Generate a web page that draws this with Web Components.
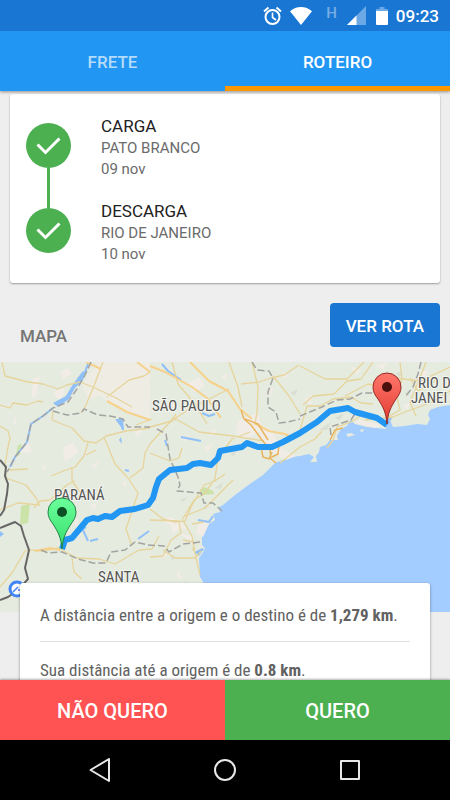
<!DOCTYPE html>
<html lang="pt-BR">
<head>
<meta charset="UTF-8">
<meta name="viewport" content="width=device-width, initial-scale=1">
<title>Roteiro</title>
<style>
    body {
        margin: 0;
        font-family: Roboto, sans-serif;
        font-size: 17px;
        color: #212121;
        --blue: #2196f3;
        --blue-dark: #1976d2;
        --green: #4caf50;
        --red: #ff5252;
        --orange: #ff9800;
        --gray: #eeeeee;
        --muted: #6b6b6b;
        --condensed: "Roboto Condensed", "Liberation Sans Narrow", Roboto, sans-serif;
    }
</style>
</head>
<body>
<freight-app>
    <status-bar slot="top" time="09:23"></status-bar>
    <tab-bar slot="top">
        <tab-item>FRETE</tab-item>
        <tab-item active>ROTEIRO</tab-item>
    </tab-bar>

    <route-card>
        <route-step>
            CARGA
            <span slot="city">PATO BRANCO</span>
            <span slot="date">09 nov</span>
        </route-step>
        <route-step last>
            DESCARGA
            <span slot="city">RIO DE JANEIRO</span>
            <span slot="date">10 nov</span>
        </route-step>
    </route-card>
    <section-header action="VER ROTA">MAPA</section-header>
    <route-map></route-map>
    <distance-card>
        <distance-row>A distância entre a origem e o destino é de <b>1,279 km</b>.</distance-row>
        <distance-row>Sua distância até a origem é de <b>0.8 km</b>.</distance-row>
    </distance-card>

    <action-bar slot="bottom">
        <action-button kind="reject">NÃO QUERO</action-button>
        <action-button kind="accept">QUERO</action-button>
    </action-bar>
    <system-nav slot="bottom"></system-nav>
</freight-app>

<script>
class FreightApp extends HTMLElement {
    constructor() {
        super();
        this.attachShadow({ mode: "open" });
        this.shadowRoot.innerHTML = `
            <style>
                :host {
                    display: flex;
                    flex-direction: column;
                    height: 100vh;
                    background: var(--gray);
                }
                header {
                    position: relative;
                    z-index: 1;
                    box-shadow: 0 1px 3px rgba(0, 0, 0, 0.4);
                }
                main {
                    flex: 1;
                    min-height: 0;
                    overflow: hidden;
                }
                footer {
                    position: relative;
                    z-index: 1;
                    box-shadow: 0 -1px 2px rgba(0, 0, 0, 0.3);
                }
            </style>
            <header><slot name="top"></slot></header>
            <main><slot></slot></main>
            <footer><slot name="bottom"></slot></footer>
        `;
    }
}

class StatusBar extends HTMLElement {
    constructor() {
        super();
        this.attachShadow({ mode: "open" });
    }

    connectedCallback() {
        this.shadowRoot.innerHTML = `
            <style>
                :host {
                    display: flex;
                    justify-content: flex-end;
                    align-items: center;
                    gap: 8px;
                    height: 31px;
                    padding: 0 11px;
                    background: var(--blue-dark);
                    color: #fff;
                    font-weight: 500;
                    line-height: 20px;
                }
                .network {
                    display: flex;
                    align-items: center;
                    gap: 10px;
                    margin: 0 2px 0 6px;
                }
                .type {
                    align-self: flex-start;
                    font-size: 15px;
                    line-height: 14px;
                    opacity: 0.4;
                }
                svg { display: block; }
            </style>
            <svg width="19" height="20" viewBox="0 0 19 20" fill="none" stroke="#fff" stroke-width="2">
                <circle cx="9.5" cy="11" r="7"/>
                <path d="M9.5 6.5v5l3.5 2.5" stroke-width="1.6"/>
                <path d="M1 5.5l4.5-4M18 5.5l-4.5-4"/>
            </svg>
            <svg width="22" height="18" viewBox="0 0 22 18" fill="#fff">
                <path d="M11 18L0 4.200C3.200 1.500 6.800 0 11 0s7.800 1.500 11 4.200z"/>
            </svg>
            <div class="network">
                <span class="type">H</span>
                <svg width="19" height="19" viewBox="0 0 19 19">
                    <path d="M19 0v19H0z" fill="#6aa8e6"/>
                    <path d="M9.500 9.500V19H0z" fill="#fff"/>
                </svg>
            </div>
            <svg width="12" height="18" viewBox="0 0 12 18">
                <path d="M3.500 0h5v2H12v3H0V2h3.500z" fill="#6aa8e6"/>
                <path d="M0 4h12v13a1 1 0 0 1-1 1H1a1 1 0 0 1-1-1z" fill="#fff"/>
            </svg>
            <span>${this.getAttribute("time")}</span>
        `;
    }
}

class TabBar extends HTMLElement {
    constructor() {
        super();
        this.attachShadow({ mode: "open" });
        this.shadowRoot.innerHTML = `
            <style>
                :host {
                    display: flex;
                    height: 60px;
                    background: var(--blue);
                }
            </style>
            <slot></slot>
        `;
    }
}

class TabItem extends HTMLElement {
    constructor() {
        super();
        this.attachShadow({ mode: "open" });
        this.shadowRoot.innerHTML = `
            <style>
                :host {
                    display: flex;
                    flex: 1;
                }
                button {
                    flex: 1;
                    padding: 7px 0 0;
                    border: 0;
                    border-bottom: 5px solid transparent;
                    background: none;
                    color: #b5dbfb;
                    font: 500 17px Roboto, sans-serif;
                    cursor: pointer;
                }
                :host([active]) button {
                    border-color: var(--orange);
                    color: #fff;
                }
            </style>
            <button type="button"><slot></slot></button>
        `;
    }
}

class RouteCard extends HTMLElement {
    constructor() {
        super();
        this.attachShadow({ mode: "open" });
        this.shadowRoot.innerHTML = `
            <style>
                :host {
                    display: block;
                    margin: 3px 10px 0;
                    padding: 22px 16px 18px;
                    border-radius: 3px;
                    background: #fff;
                    box-shadow: 0 1px 2px rgba(0, 0, 0, 0.35);
                }
            </style>
            <slot></slot>
        `;
    }
}

class RouteStep extends HTMLElement {
    constructor() {
        super();
        this.attachShadow({ mode: "open" });
        this.shadowRoot.innerHTML = `
            <style>
                :host {
                    display: flex;
                    gap: 30px;
                    line-height: 21px;
                }
                .rail {
                    display: flex;
                    flex-direction: column;
                    align-items: center;
                    padding-top: 7px;
                    margin-bottom: -7px;
                }
                .line {
                    flex: 1;
                    width: 3px;
                    background: var(--green);
                }
                .text { padding-bottom: 21px; }
                .text, .info {
                    display: flex;
                    flex-direction: column;
                }
                .info {
                    padding-top: 1px;
                    font-size: 15px;
                    color: var(--muted);
                }
                :host([last]) .line { display: none; }
                :host([last]) .text { padding-bottom: 0; }
            </style>
            <div class="rail">
                <svg width="45" height="45" viewBox="0 0 45 45">
                    <circle cx="22.500" cy="22.500" r="22.500" fill="#4caf50"/>
                    <path d="M11.500 21.500l8 8 14-14" fill="none" stroke="#fff" stroke-width="3"/>
                </svg>
                <div class="line"></div>
            </div>
            <div class="text">
                <span><slot></slot></span>
                <div class="info">
                    <slot name="city"></slot>
                    <slot name="date"></slot>
                </div>
            </div>
        `;
    }
}

class SectionHeader extends HTMLElement {
    constructor() {
        super();
        this.attachShadow({ mode: "open" });
    }

    connectedCallback() {
        this.shadowRoot.innerHTML = `
            <style>
                :host {
                    display: flex;
                    justify-content: space-between;
                    align-items: flex-end;
                    padding: 20px 10px 15px 20px;
                }
                h2 {
                    margin: 0;
                    font-size: 17px;
                    font-weight: 500;
                    line-height: 22px;
                    color: #757575;
                }
                button {
                    height: 44px;
                    padding: 2px 16px 0;
                    border: 0;
                    border-radius: 4px;
                    background: var(--blue-dark);
                    color: #fff;
                    font: 500 17px Roboto, sans-serif;
                    cursor: pointer;
                }
            </style>
            <h2><slot></slot></h2>
            <button type="button">${this.getAttribute("action")}</button>
        `;
    }
}

class RouteMap extends HTMLElement {
    constructor() {
        super();
        this.attachShadow({ mode: "open" });
        this.shadowRoot.innerHTML = `
            <style>
                :host {
                    display: block;
                    height: 250px;
                    background: #a3ccff;
                }
                svg {
                    display: block;
                    width: 100%;
                    height: 100%;
                }
                .land { fill: #e6ebdf; }
                .town { fill: #f2ece6; }
                .park { fill: #cbe2a9; }
                .water { fill: #8fc0f8; }
                .river, .road, .highway, .border, .country, .route {
                    fill: none;
                    stroke-linejoin: round;
                }
                .river { stroke: #8fc0f8; stroke-width: 2; }
                .road { stroke: #e6d49b; stroke-width: 1.3; }
                .highway { stroke: #f6d18b; stroke-width: 2; }
                .ring { stroke: #e8b45f; stroke-width: 1.5; }
                .border { stroke: #a3a3a0; stroke-width: 1.5; stroke-dasharray: 7 3; }
                .country { stroke: #666; stroke-width: 2; }
                .route { stroke: #2196f3; stroke-width: 6; }
                text {
                    font: 15px var(--condensed);
                    fill: #555;
                    stroke: #f4f6f0;
                    stroke-width: 2;
                    paint-order: stroke;
                }
            </style>
            <svg viewBox="0 362 450 250" preserveAspectRatio="xMidYMid slice">
                <defs>
                    <linearGradient id="red" x1="0" y1="0" x2="0" y2="1">
                        <stop offset="0" stop-color="#ff776b"/>
                        <stop offset="1" stop-color="#e13a30"/>
                    </linearGradient>
                    <linearGradient id="green" x1="0" y1="0" x2="0" y2="1">
                        <stop offset="0" stop-color="#6cff9b"/>
                        <stop offset="1" stop-color="#35dd6c"/>
                    </linearGradient>
                    <path id="pin" d="M0 0C-1-12-4-17-9-25C-12-29-14-32-14-37A14 14 0 0 1 14-37C14-32 12-29 9-25C4-17 1-12 0 0z"/>
                </defs>

                <path class="land" d="M0 362H450V405L438 407 430 410 428 415 430 419 427 425 417 424 405 426 393 427 390 420
                    385 419 386 429 367 427 355 424 350 420 347 426 341 429 337 436 338 440 330 440 326 445 320 447
                    319 452 316 456 317 462 310 462 314 457 309 454 300 456 290 457 283 460 275 463 263 475 247 486
                    235 495 223 505 219 507 220 512 213 514 215 520 209 524 205 530 202 536 202 545 205 548 202 554
                    199 558 200 577 203 582 208 612H0z"/>
                <path class="land" d="M346 434l5-1 4 2-7 2zM360 430l3-1 1 2-3 1z"/>
                <path class="town" d="M98 362H150V420L133 414 112 406 100 395 88 400 82 385z" opacity=".7"/>
                <path class="town" d="M60 372l8-4 4 6-9 5zM33 379l7-3-4 20-4 2zM55 391l10-3-4 12-7-4zM15 416l2 8-4-1zM63 448l10-6 6 10-9 6-5 3zM20 446l8-4 4 10-11 1zM43 463l3 7-4-2zM91 465l8-4-4 9zM134 432l8-2-4 8z"/>
                <path class="town" d="M187 384l12-7 6 9-10 6zM238 421l20-9 4 18-16 9-10-5zM258 424l14 6 8 18 16 8-10 4-16-9-9-12zM221 376l6-3-2 8zM204 448l9-5-5 9zM209 432l7-3-3 8zM180 435l10 2-6 5z"/>
                <path class="town" d="M161 520l8-3 12 4 6 9-7-2-7 6-2-8zM203 520l6 4-6 13-7-4 3-10zM176 532l18 5-4 3zM178 570l4 10-5-3zM162 554l7-2-6 7zM90 505l8-2-4 7zM122 483l5-3-2 7zM67 520l9-4 2 10zM359 420l22 5-6 3-20-5z"/>
                <path class="town" d="M350 366l11 4-5 5zM304 400l8-5-1 10zM376 366l10-4-2 8zM403 405l7-3-3 8zM421 370l8 2-6 6zM281 374l6-2-1 7zM266 391l8-4-4 8zM170 400l9 8-7-1z"/>
                <path class="park" d="M21 506l9-2-2 19-8 2zM200 490l5-3 8 4 1 3-12 1zM18 445l4-1-3 12-3-1z"/>
                <path fill="#d9dfd3" d="M230 454l6-3-2 5zM215 488l8-6-2 7zM180 500l8-3-5 5zM203 507l7-4-4 6zM170 557l5-3-2 7zM181 585l6-4-3 7zM319 430l12-8-4 8zM335 418l9-5-4 7zM290 393l8-4-3 7zM405 393l6-4-3 7zM395 374l8-4-3 7z"/>

                <path class="river" d="M85 372l3-8M53 408l-10 8-12 8-4 18-12 15-5 10M162 364l6 7 13 9M181 437l20 4M165 440l2 6M82 528l6 13M76 535l10-8M90 541l8-2M138 539l11-8M120 421l3 9M129 471l-4-1M202 413l7 3 6-2M198 520l11 2 4-6M195 553l8-4"/>
                <path class="water" d="M53 403l13-7 7-12 9-12 5-2-4 10-8 8-6 11-11 8zM115 419l8 0 1 11-3-3zM119 440l2-3 1 7zM196 553l8-5-5 8zM387 415l5 3-4 7zM57 527l6 5-4-1zM0 531l4 3-4 3z"/>

                <path class="road" d="M0 405l10 3 3-5 14 2 11-4 5 1M2 362l3 14 23 6 15 2 15 5 9-4 13-3 15 6 21 10 16 9M103 362l-9 24-9 21-4 6M107 397l22-17 15-4 6-4
                    M53 411l-1 9 20 8 12 13 12 2 10-7 20-5 24-3M88 443l-4 13-9 11-9 3-15 6M96 450l-10 5M72 467l0 14 10 14M104 438l3 6 8 20 13 14 10 15-12 36 6 17
                    M0 426l8 5 2 7-2 9-3 18 1 13 20 7 10 13 3 6M8 470l20-1M34 508l6-7 10-1 17-15 8-4M0 510l18-7 22 2M0 587l12-14 13-22 5-2
                    M30 550l13 1 15-3 19 10 22 1 16 5 24-14 13-1 7-13M72 558l2 14 8 7M130 478l13-10 2-15 5-9M136 425l16-6M150 444l20-22 6-8"/>
                <path class="road" d="M172 362l6 22 17 20 12 20M174 418l25 14 34 4 31 5M150 427l22-6 5-4 14-9 26-13 12-6M150 453l20 8 9-3 3-10M229 362l9 25 4 20M241 384l18-2 12-4 13-3 15-10M255 423l2-10 1-26-6-25M273 376l16 20 11 18
                    M250 432l-18 7-9 12M218 457l-3 22-11 15-10 6-12 20M150 509l13 10 12 3 10-1 7-16 12-20 11-4 10-7M150 520l29 1 2 12-10 7-8 16-13 1M184 522l8 14 3 17 5 22M163 550l12 8 20 0 6-7M192 524l12-2M183 540l11 2-1 9M185 516l20-8 12-12 16-16"/>
                <path class="road" d="M300 366l25 13 22 0 17-17M303 405l10-9 21-2 13-13 14-2 12-17M300 430l7-24 13 0 13-7 18-2 10 6 12 1M400 362l2 17-5 18 3 13-12 7M365 420l28-3 12-5 25-9 20-12M345 396l23-12 10 2 17-8 25 3 30-14M410 378l8 13 20-12M327 448l6-8 4-13 14-5 14-9M280 463l20-16 15-8 7-8M426 362l-6 16-10 24 6 14"/>
                <path class="highway" d="M86 362l15 7M137 362l13 10M107 401l20 11 23 8M150 366l15 6 27 15 15 11 14 20M190 362l19 19 19 10 12 18 12 10M254 423l15 8 16 3 10 5M60 550l-10-2-15 3"/>
                <path class="highway ring" d="M241 410l3 9 7 6 11 15 8 9 1 10 5 4M261 447l2 10 6 2 3-7M279 445l-1 9-6 3M245 419l13 5 10 16"/>
                <path class="highway ring" d="M330 440l5-10 8-2"/>
                <path class="border" d="M91 362l-5 11-9 16-9 13-15 6-10 8-12 8-4 18-12 15-5 10-3 5M53 411l14 4 14-2 3-4 14 6 12 1 13 3 5 8 22 0M157 429l9 5 4 25 8 18 2 8-3 6 24 2 3 10 9 0 9 8
                    M252 362l5 8 12 1 4 7-5 14 0 15 8 5 3 11 9-1 12-3M41 550l7 3 14-1 16 7 15 4 13 0 5-11 14-2 10-8 13 3 16 1 5 6 14-8 18-2"/>
                <path class="border" d="M300 416l22-9 15-7 13-1 12-6 12 0M421 362l-3 12-5 13-8 10M331 435l-1-8 9-3 12-4 5-8"/>
                <path class="country" d="M0 460l6 7-1 9 3 8-1 10-3 16-4 6M0 528l5-2 10-4 6 4 3 10 5 14-4 18 3 11-10 11-10 7-8 3"/>
                <circle cx="17" cy="589" r="7" fill="#fff" stroke="#4285f4" stroke-width="3"/>
                <path d="M13 592l5-5M18 590h4" fill="none" stroke="#4285f4" stroke-width="1.500"/>

                <text x="152" y="411">SÃO PAULO</text>
                <text x="54" y="500">PARANÁ</text>
                <text x="98" y="582">SANTA</text>
                <text x="418" y="388">RIO D</text>
                <text x="411" y="403">JANEI</text>

                <path class="route" d="M62 549l3-9 7-2 15-18 6-2 5 1 7-3 7 1 8-6 15-2 13-4 5-7 3-11 3-8 11-9 17-2 6-4 7-1 11 2 7-7 2-7
                    22-4 5-4 11 4h14l11-5 17-9 17-11 13-11 18-3 7 4 22 6 10 7"/>
                <g transform="translate(387 424)">
                    <use href="#pin" fill="url(#red)" stroke="#962a24"/>
                    <circle cy="-37" r="5" fill="#4b100d"/>
                </g>
                <g transform="translate(62 549)">
                    <use href="#pin" fill="url(#green)" stroke="#218344"/>
                    <circle cy="-37" r="5" fill="#0b5125"/>
                </g>
            </svg>
        `;
    }
}

class DistanceCard extends HTMLElement {
    constructor() {
        super();
        this.attachShadow({ mode: "open" });
        this.shadowRoot.innerHTML = `
            <style>
                :host {
                    display: block;
                    position: relative;
                    margin: -29px 20px 20px;
                    padding: 4px 20px;
                    border-radius: 3px;
                    background: #fff;
                    box-shadow: 0 1px 3px rgba(0, 0, 0, 0.4);
                }
            </style>
            <slot></slot>
        `;
    }
}

class DistanceRow extends HTMLElement {
    constructor() {
        super();
        this.attachShadow({ mode: "open" });
        this.shadowRoot.innerHTML = `
            <style>
                :host {
                    display: block;
                    padding: 16px 0 14px;
                    border-bottom: 1px solid #e0e0e0;
                    font-family: var(--condensed);
                    font-size: 17px;
                    line-height: 24px;
                    color: #616161;
                }
                :host(:last-child) { border-bottom: 0; }
            </style>
            <slot></slot>
        `;
    }
}

class ActionBar extends HTMLElement {
    constructor() {
        super();
        this.attachShadow({ mode: "open" });
        this.shadowRoot.innerHTML = `
            <style>
                :host {
                    display: flex;
                    height: 60px;
                }
            </style>
            <slot></slot>
        `;
    }
}

class ActionButton extends HTMLElement {
    constructor() {
        super();
        this.attachShadow({ mode: "open" });
        this.shadowRoot.innerHTML = `
            <style>
                :host {
                    display: flex;
                    flex: 1;
                }
                button {
                    flex: 1;
                    padding: 2px 0 0;
                    border: 0;
                    background: var(--green);
                    color: #fff;
                    font: 500 20px Roboto, sans-serif;
                    cursor: pointer;
                }
                :host([kind="reject"]) button { background: var(--red); }
            </style>
            <button type="button"><slot></slot></button>
        `;
    }
}

class SystemNav extends HTMLElement {
    constructor() {
        super();
        this.attachShadow({ mode: "open" });
        this.shadowRoot.innerHTML = `
            <style>
                :host {
                    display: flex;
                    justify-content: center;
                    gap: 81px;
                    height: 60px;
                    background: #000;
                }
                button {
                    display: flex;
                    align-items: center;
                    justify-content: center;
                    width: 44px;
                    padding: 0;
                    border: 0;
                    background: none;
                }
                svg {
                    fill: none;
                    stroke: #e8e8e8;
                    stroke-width: 2;
                    stroke-linejoin: round;
                }
            </style>
            <button type="button" aria-label="Voltar">
                <svg width="24" height="24" viewBox="0 0 24 24"><path d="M21 1v22L2.500 12z"/></svg>
            </button>
            <button type="button" aria-label="Início">
                <svg width="24" height="24" viewBox="0 0 24 24"><circle cx="12" cy="12" r="10"/></svg>
            </button>
            <button type="button" aria-label="Recentes">
                <svg width="24" height="24" viewBox="0 0 24 24"><path d="M3 3h18v18H3z"/></svg>
            </button>
        `;
    }
}

customElements.define("freight-app", FreightApp);
customElements.define("status-bar", StatusBar);
customElements.define("tab-bar", TabBar);
customElements.define("tab-item", TabItem);
customElements.define("route-card", RouteCard);
customElements.define("route-step", RouteStep);
customElements.define("section-header", SectionHeader);
customElements.define("route-map", RouteMap);
customElements.define("distance-card", DistanceCard);
customElements.define("distance-row", DistanceRow);
customElements.define("action-bar", ActionBar);
customElements.define("action-button", ActionButton);
customElements.define("system-nav", SystemNav);
</script>
</body>
</html>
